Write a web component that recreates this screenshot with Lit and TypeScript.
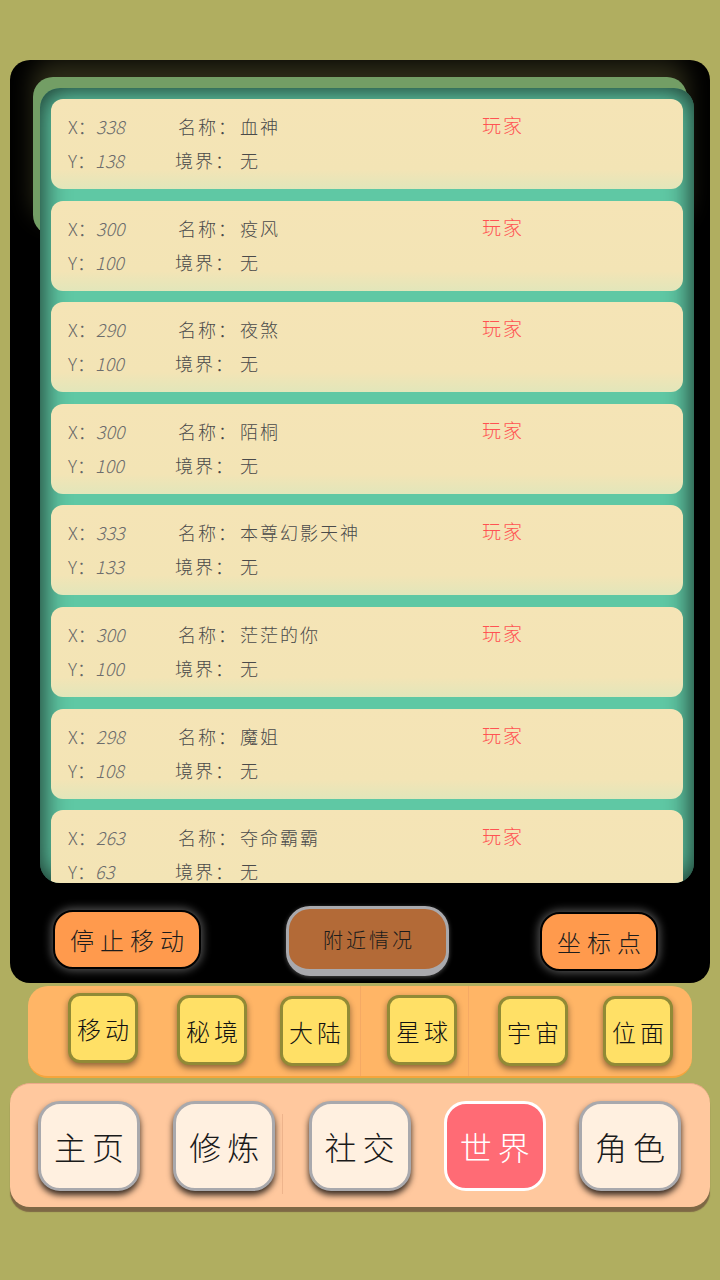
import { LitElement, html, css } from "lit";
import { customElement } from "lit/decorators.js";

const ROWS = [
  ["338", "138", "血神"],
  ["300", "100", "疫风"],
  ["290", "100", "夜煞"],
  ["300", "100", "陌桐"],
  ["333", "133", "本尊幻影天神"],
  ["300", "100", "茫茫的你"],
  ["298", "108", "魔姐"],
  ["263", "63", "夺命霸霸"],
];
const SUB = ["移动", "秘境", "大陆", "星球", "宇宙", "位面"];
const NAV = ["主页", "修炼", "社交", "世界", "角色"];

@customElement("app-root")
export class AppRoot extends LitElement {
  static styles = css`
    :host {
      display: block;
      width: 720px;
      height: 1280px;
      overflow: hidden;
      background: #b0ae60;
      font-family: "Noto Sans CJK SC", "Noto Sans", sans-serif;
      font-weight: 300;
      box-sizing: border-box;
      padding-top: 60px;
    }
    * { box-sizing: border-box; }
    .panel {
      position: relative;
      overflow: hidden;
      margin: 0 10px;
      height: 923px;
      border-radius: 20px;
      background: #000;
      padding: 28px 16px 0 30px;
    }
    .back {
      position: absolute;
      left: 23px;
      top: 17px;
      width: 654px;
      height: 158px;
      border-radius: 20px;
      background: #739e65;
      box-shadow: 0 -16px 24px rgba(176, 174, 96, 0.26);
    }
    .list {
      position: relative;
      height: 795px;
      overflow: hidden;
      border-radius: 20px;
      background: #5fc8a4;
      box-shadow: inset 0 0 26px 3px rgba(0, 0, 0, 0.75);
      padding: 11px 11px 0;
      display: flex;
      flex-direction: column;
      gap: 11.6px;
    }
    .card {
      flex: none;
      position: relative;
      height: 90px;
      border-radius: 12px;
      background: linear-gradient(#f5e4b6 0, #f3e4b5 78%, #e2e6ba 100%);
      color: #4a4a4a;
      font-size: 18px;
      letter-spacing: 2px;
      display: grid;
      grid-template-columns: 107px 65px 1fr;
      grid-template-rows: 34px 34px;
      padding: 10px 0 0 17px;
      align-items: center;
      line-height: 20px;
    }
    .coord { display: flex; color: #666; }
    .axis { letter-spacing: 0; }
    .num {
      color: #6c6c6c;
      font-style: italic;
      letter-spacing: 0;
    }
    .lab2 { margin-left: 3px; }
    .role {
      position: absolute;
      left: 431px;
      top: 16px;
      color: #ff5252;
      font-size: 19px;
    }
    .actions {
      display: flex;
      align-items: flex-start;
      padding-left: 13px;
      margin-top: 23px;
    }
    .act {
      display: flex;
      align-items: center;
      justify-content: center;
      color: #1c1c1c;
      font-size: 24px;
      letter-spacing: 6px;
      padding-left: 6px;
      background: #ff9a4d;
      border-radius: 20px;
      border: 2px solid #000;
      box-shadow: 0 0 8px 2px rgba(255, 255, 255, 0.32);
    }
    .act.a { width: 148px; height: 59px; margin-top: 4px; }
    .act.c { width: 118px; height: 59px; margin-top: 6px; margin-left: 91px; }
    .act.b {
      width: 163px;
      height: 70px;
      margin-left: 85px;
      font-size: 20px;
      letter-spacing: 3px;
      padding-left: 3px;
      background: #b36a37;
      border: 3px solid #a9a9ad;
      border-bottom-width: 7px;
      border-radius: 24px;
      box-shadow: 0 1px 4px rgba(255, 255, 255, 0.3);
    }
    .sub {
      display: flex;
      align-items: flex-start;
      margin: 3px 28px 0;
      height: 92px;
      padding: 7px 0 0 40px;
      border-radius: 20px;
      background:
        linear-gradient(#f5a964, #f5a964) no-repeat 332px 0 / 1px 100%,
        linear-gradient(#f5a964, #f5a964) no-repeat 440px 0 / 1px 100%,
        #ffb566;
      border-bottom: 2px solid #f5a53c;
    }
    .sb {
      flex: none;
      width: 70px;
      height: 70px;
      display: flex;
      align-items: center;
      justify-content: center;
      border-radius: 12px;
      background: #ffe066;
      border: 3px solid #918a36;
      box-shadow: 0 3px 6px rgba(0, 0, 0, 0.45);
      color: #111;
      font-size: 24px;
      letter-spacing: 4px;
      padding-left: 4px;
      white-space: nowrap;
    }
    .s1 { margin-left: 39px; margin-top: 2px; }
    .s2 { margin-left: 33px; margin-top: 3px; }
    .s3 { margin-left: 37px; margin-top: 2px; }
    .s4 { margin-left: 41px; margin-top: 3px; }
    .s5 { margin-left: 35px; margin-top: 3px; }
    .nav {
      display: flex;
      align-items: flex-start;
      margin: 5px 10px 0;
      height: 124px;
      padding: 17px 0 0 28px;
      gap: 33.25px;
      border-radius: 20px;
      background:
        linear-gradient(#eeb48c, #eeb48c) no-repeat 272px 30px / 1px 80px,
        #ffc89e;
      border-top: 1px solid #eda98a;
      box-shadow: 0 5px 1px rgba(110, 80, 60, 0.75);
    }
    .nb {
      flex: none;
      width: 102px;
      height: 90px;
      display: flex;
      align-items: center;
      justify-content: center;
      border-radius: 22px;
      background: #fff0e0;
      border: 3px solid #a9a9ad;
      box-shadow: 0 4px 6px rgba(0, 0, 0, 0.8);
      color: #1a1a1a;
      font-size: 32px;
      letter-spacing: 6px;
      padding-left: 6px;
      white-space: nowrap;
    }
    .nb.on {
      background: #ff6b75;
      border-color: #fff;
      color: #fff;
      box-shadow: none;
    }
  `;

  render() {
    return html`
      <div class="panel">
        <div class="back"></div>
        <div class="list">
          ${ROWS.map(
            (r) => html`
              <div class="card">
                <span class="coord"><span class="axis">X：</span><span class="num">${r[0]}</span></span>
                <span class="lab2">名称：</span>
                <span>${r[2]}</span>
                <span class="coord"><span class="axis">Y：</span><span class="num">${r[1]}</span></span>
                <span>境界：</span>
                <span>无</span>
                <span class="role">玩家</span>
              </div>
            `
          )}
        </div>
        <div class="actions">
          <div class="act a">停止移动</div>
          <div class="act b">附近情况</div>
          <div class="act c">坐标点</div>
        </div>
      </div>
      <div class="sub">
        ${SUB.map((s, i) => html`<div class="sb ${i ? "s" + i : ""}">${s}</div>`)}
      </div>
      <div class="nav">
        ${NAV.map((s, i) => html`<div class="nb ${i === 3 ? "on" : ""}">${s}</div>`)}
      </div>
    `;
  }
}
